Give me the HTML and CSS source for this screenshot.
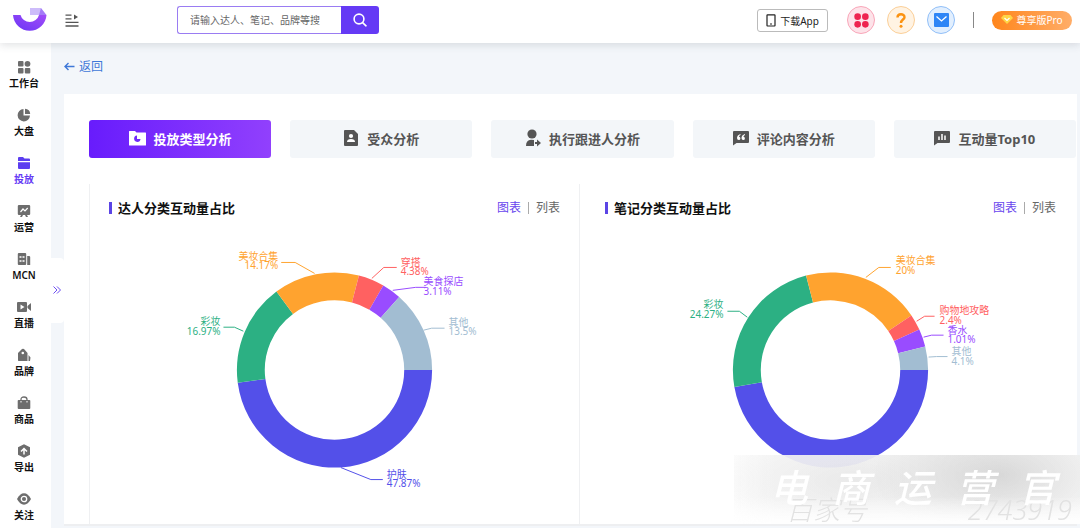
FILE: index.html
```html
<!DOCTYPE html>
<html lang="zh-CN">
<head>
<meta charset="utf-8">
<meta name="viewport" content="width=device-width, initial-scale=1">
<title>投放类型分析</title>
<link rel="stylesheet" href="styles.css">
</head>
<body>
<header class="topbar">
  <a class="logo" href="#" aria-label="首页">
    <svg width="34" height="26" viewBox="0 0 34 26">
      <defs><linearGradient id="logo-fill" x1="0" x2="1" y1="1" y2="0"><stop offset="0" stop-color="#6a35f5"/><stop offset="1" stop-color="#a24df8"/></linearGradient></defs>
      <path d="M0 8h7.500a9.600 9.600 0 0 0 18.500 0h7.500A16.800 17.200 0 0 1 0 8z" fill="url(#logo-fill)"/>
      <path d="M17 1h11v7H17z" fill="#cdbcfa"/><path d="M28 1l5.500 7H26z" fill="#a47bf7"/>
    </svg>
  </a>
  <button class="icon-button" type="button" aria-label="展开菜单">
    <svg width="14" height="13" viewBox="0 0 14 13" fill="none" stroke="#555" stroke-width="1.300"><path d="M.5 1.200h6M.5 4.800h6M.5 8.400h13M.5 12h13"/><path d="M9 .5l4 2.500-4 2.500z" fill="#555" stroke="none"/></svg>
  </button>
  <form class="search">
    <input class="search-input" type="text" placeholder="请输入达人、笔记、品牌等搜" aria-label="搜索">
    <button class="search-button" type="button" aria-label="搜索">
      <svg width="14" height="14" viewBox="0 0 14 14" fill="none" stroke="#fff" stroke-width="1.600" stroke-linecap="round"><circle cx="6" cy="6" r="4.900"/><path d="M9.600 9.600l3.400 3.200"/></svg>
    </button>
  </form>
  <div class="tools">
    <button class="download" type="button">
      <svg width="10" height="13" viewBox="0 0 10 13" fill="none" stroke="#222" stroke-width="1.200"><rect x="1" y=".8" width="8" height="11.200" rx=".5"/><path d="M4 10h2"/></svg>
      下载App
    </button>
    <button class="round round-red" type="button" aria-label="应用">
      <svg width="15" height="15" viewBox="0 0 14 14" fill="#ee2450"><circle cx="3.400" cy="3.400" r="3.100"/><circle cx="10.600" cy="3.400" r="3.100"/><circle cx="3.400" cy="10.600" r="3.100"/><circle cx="10.600" cy="10.600" r="3.100"/></svg>
    </button>
    <button class="round round-orange" type="button" aria-label="帮助">
      <svg width="10" height="15" viewBox="0 0 10 15"><path d="M1.500 4.500C1.500.3 8.500.3 8.500 4.200 8.500 6.600 5 6.600 5 10" fill="none" stroke="#fb9211" stroke-width="2.400"/><circle cx="5" cy="13.200" r="1.500" fill="#fb9211"/></svg>
    </button>
    <button class="round round-blue" type="button" aria-label="消息">
      <svg width="15" height="14" viewBox="0 0 15 14"><rect width="15" height="14" rx="1" fill="#2f86f6"/><path d="M2.500 3.500l5 4.500 5-4.500" fill="none" stroke="#fff" stroke-width="1.300"/></svg>
    </button>
    <span class="rule"></span>
    <button class="pro" type="button">
      <svg width="12" height="9" viewBox="0 0 12 9"><path d="M2.500 0h7L12 3 6 9 0 3z" fill="#ffd546"/><path d="M3.500 3L6 5.500 8.500 3" fill="none" stroke="#fff" stroke-width="1.200"/></svg>
      尊享版Pro
    </button>
  </div>
</header>
<div class="shell">
  <nav class="sidebar">
    <a class="nav-item" href="#"><svg class="nav-icon" viewBox="0 0 14 14"><rect x="1" y="1" width="5.500" height="5.500" rx="1"/><circle cx="10.500" cy="3.800" r="2.900"/><rect x="1" y="8" width="5.500" height="5.500" rx="1"/><rect x="7.800" y="8" width="5.500" height="5.500" rx="1"/></svg>工作台</a>
    <a class="nav-item" href="#"><svg class="nav-icon" viewBox="0 0 14 14"><path d="M6.500 1A6.200 6.200 0 1 0 13 7.500H6.500z"/><path d="M8 .8V6h5.200A5.600 5.600 0 0 0 8 .8z"/></svg>大盘</a>
    <a class="nav-item is-active" href="#"><svg class="nav-icon" viewBox="0 0 14 14"><path d="M1 5V2q0-1 1-1h4l1.500 1.500H12q1 0 1 1V5zM1 6.200h12V12q0 1-1 1H2q-1 0-1-1z"/></svg>投放</a>
    <a class="nav-item" href="#"><svg class="nav-icon" viewBox="0 0 14 14"><path d="M2 1h10q1.200 0 1.200 1v8q0 1-1.200 1h-2l1 2H9l-1-2H6l-1 2H3l1-2H2q-1.200 0-1.200-1V2Q.8 1 2 1z"/><path d="M3.500 8l2.500-3 2 2 2.700-3" fill="none" stroke="#fff" stroke-width="1.200"/></svg>运营</a>
    <a class="nav-item" href="#"><svg class="nav-icon" viewBox="0 0 14 14"><rect x=".8" y="1" width="8.400" height="12" rx="1"/><path d="M10.200 4H12q1.200 0 1.200 1v8h-3z"/><path d="M2.500 5h2M5.500 5h2M2.500 9h2M5.500 9h2" fill="none" stroke="#fff" stroke-width="1.300"/></svg>MCN</a>
    <a class="nav-item" href="#"><svg class="nav-icon" viewBox="0 0 14 14"><path d="M1 2h8q1 0 1 1v8q0 1-1 1H1q-1 0-1-1V3q0-1 1-1zM10.500 6L14 3v8l-3.500-3z"/><path d="M3.500 4.500v5L7.500 7z" fill="#fff"/></svg>直播</a>
    <a class="nav-item" href="#"><svg class="nav-icon" viewBox="0 0 14 14"><path d="M1 5l4-4q1-.6 2 0l3.500 4v8h-9Q1 13 1 12zM11.500 7l2 2.500-.5 3.500h-1.500z"/><circle cx="5.800" cy="5" r="1.300" fill="#fff"/></svg>品牌</a>
    <a class="nav-item" href="#"><svg class="nav-icon" viewBox="0 0 14 14"><path d="M1.500 4h11q.8 0 .8 1v7q0 1-1 1H1.700q-1 0-1-1V5q0-1 .8-1z"/><path d="M4 5V3.500Q4 1 7 1t3 2.500V5" fill="none" stroke="#6d6d6d" stroke-width="1.300"/><path d="M4 5v1.500M10 5v1.500" stroke="#fff"/></svg>商品</a>
    <a class="nav-item" href="#"><svg class="nav-icon" viewBox="0 0 14 14"><path d="M7 .3l6 3v7.400l-6 3-6-3V3.300z"/><path d="M7 10.500V5M4 7.500l3-3 3 3" fill="none" stroke="#fff" stroke-width="1.500"/></svg>导出</a>
    <a class="nav-item" href="#"><svg class="nav-icon" viewBox="0 0 14 14"><path d="M0 7q3-5.700 7-5.700T14 7q-3 5.700-7 5.700T0 7z"/><circle cx="7" cy="7" r="2.700" fill="none" stroke="#fff" stroke-width="1.300"/></svg>关注</a>
    <button class="expander" type="button" aria-label="展开侧栏">
      <svg width="8" height="8" viewBox="0 0 8 8" fill="none" stroke="#6b4cf0"><path d="M.5.500L4 4 .5 7.500M4 .5L7.500 4 4 7.500"/></svg>
    </button>
  </nav>
  <main class="content">
    <a class="back" href="#">
      <svg width="11" height="9" viewBox="0 0 11 9" fill="none" stroke="#3f78d8" stroke-width="1.400"><path d="M10.500 4.500H1M4.500 1L1 4.500 4.500 8"/></svg>
      返回
    </a>
    <section class="card">
      <div class="tabs">
        <button class="tab is-current" type="button"><svg width="17" height="16" viewBox="0 0 17 16"><path d="M0 1.500Q0 1 .5 1h5.500l1.500 1.500h9q.5 0 .5.500v12q0 .5-.5.500H.5Q0 15.500 0 15z" fill="#fff"/><path d="M8 5.500A3.200 3.200 0 1 0 11.500 9H8z" fill="#7028fb"/></svg>投放类型分析</button>
        <button class="tab" type="button"><svg width="16" height="16" viewBox="0 0 16 16"><path d="M1 1q0-1 1-1h9l4 4v11q0 1-1 1H2q-1 0-1-1z" fill="#555"/><circle cx="8" cy="6" r="2.100" fill="#fff"/><path d="M4 12q0-3 4-3t4 3z" fill="#fff"/></svg>受众分析</button>
        <button class="tab" type="button"><svg width="16" height="18" viewBox="0 0 16 18" fill="#555"><circle cx="7" cy="5" r="4.600"/><path d="M1 17q0-6 5-6.200l3 .2v6zM10 13h2v-2.500l4 3.500-4 3.500V15h-2z"/></svg>执行跟进人分析</button>
        <button class="tab" type="button"><svg width="16" height="16" viewBox="0 0 16 16"><path d="M1 1h14q1 0 1 1v10q0 1-1 1H3.500L0 15.500V2q0-1 1-1z" fill="#555"/><path d="M7.500 4Q4 5 4 8q0 2 1.700 2t1.700-1.600Q7.400 7 6 6.800 6 5.500 7.500 5zM12 4Q8.500 5 8.500 8q0 2 1.700 2t1.700-1.600q0-1.400-1.400-1.600 0-1.300 1.500-1.800z" fill="#fff"/></svg>评论内容分析</button>
        <button class="tab" type="button"><svg width="16" height="16" viewBox="0 0 16 16"><path d="M1 1h14q1 0 1 1v10q0 1-1 1H3.500L0 15.500V2q0-1 1-1z" fill="#555"/><path d="M5 6.500V10M8 4v6M11 5.500V10" stroke="#fff" stroke-width="1.500"/></svg>互动量Top10</button>
      </div>
      <div class="panels">
        <section class="panel panel-framed">
          <div class="panel-head">
            <h2 class="panel-title">达人分类互动量占比</h2>
            <button class="view is-current" type="button">图表</button><button class="view" type="button">列表</button>
          </div>
          <svg class="chart" viewBox="0 1 491 298" role="img" aria-label="达人分类互动量占比">
            <g id="talent-ring"></g>
            <g class="leaders">
              <path stroke="#ffa32f" d="M225.500 48L206 37H192"/>
              <path stroke="#ff6161" d="M283 53l12-11h13"/>
              <path stroke="#994cff" d="M304 65l23-3h10"/>
              <path stroke="#a2bdd2" d="M335 105l8-2h13"/>
              <path stroke="#2cb083" d="M154 106l-9-4h-11"/>
              <path stroke="#5350e9" d="M252 243l30 12h12"/>
            </g>
            <g class="labels">
              <text class="end orange"><tspan x="189" y="35">美妆合集</tspan><tspan x="189" y="44">14.17%</tspan></text>
              <text class="red"><tspan x="312" y="41">穿搭</tspan><tspan x="312" y="50">4.38%</tspan></text>
              <text class="purple"><tspan x="335" y="60">美食探店</tspan><tspan x="335" y="70">3.11%</tspan></text>
              <text class="gray"><tspan x="360" y="101">其他</tspan><tspan x="360" y="110">13.5%</tspan></text>
              <text class="end green"><tspan x="131" y="100">彩妆</tspan><tspan x="131" y="110">16.97%</tspan></text>
              <text class="blue"><tspan x="298" y="253">护肤</tspan><tspan x="298" y="262">47.87%</tspan></text>
            </g>
          </svg>
        </section>
        <section class="panel">
          <div class="panel-head">
            <h2 class="panel-title">笔记分类互动量占比</h2>
            <button class="view is-current" type="button">图表</button><button class="view" type="button">列表</button>
          </div>
          <svg class="chart" viewBox="0 1 491 298" role="img" aria-label="笔记分类互动量占比">
            <g id="note-ring"></g>
            <g class="leaders">
              <path stroke="#ffa32f" d="M281 52l13-10h12"/>
              <path stroke="#ff6161" d="M332 96l8-5h10"/>
              <path stroke="#994cff" d="M339 112l8-2h12"/>
              <path stroke="#a2bdd2" d="M344 132l8-0.500h11"/>
              <path stroke="#2cb083" d="M162 92l-8-6h-12"/>
            </g>
            <g class="labels">
              <text class="orange"><tspan x="311" y="39">美妆合集</tspan><tspan x="311" y="49">20%</tspan></text>
              <text class="red"><tspan x="355" y="89">购物地攻略</tspan><tspan x="355" y="99">2.4%</tspan></text>
              <text class="purple"><tspan x="363" y="109">香水</tspan><tspan x="363" y="118">1.01%</tspan></text>
              <text class="gray"><tspan x="367" y="130">其他</tspan><tspan x="367" y="140">4.1%</tspan></text>
              <text class="end green"><tspan x="138" y="83">彩妆</tspan><tspan x="138" y="93">24.27%</tspan></text>
            </g>
          </svg>
        </section>
      </div>
    </section>
  </main>
</div>
<div class="watermark">
  <span class="watermark-id"><span>百家号</span><span>2743919</span></span>
  <span class="watermark-name"><span>电</span><span>商</span><span>运</span><span>营</span><span>官</span></span>
</div>
<script src="charts.js"></script>
</body>
</html>
```
FILE: styles.css
```css
* { box-sizing: border-box; }
body {
  margin: 0;
  min-height: 100vh;
  display: flex;
  flex-direction: column;
  background: #f3f6fa;
  color: #222;
  font-family: "Noto Sans", "Noto Sans CJK SC", sans-serif;
  font-size: 12px;
}
button, input { font: inherit; }
button { border: 0; padding: 0; background: none; color: inherit; display: flex; align-items: center; justify-content: center; white-space: nowrap; }
a { text-decoration: none; color: inherit; }
svg { flex: none; }

.topbar {
  height: 43px;
  padding: 0 8px 3px 13px;
  display: flex;
  align-items: center;
  background: #fff;
  box-shadow: 0 2px 8px rgba(60, 70, 80, .16);
  z-index: 2;
}
.logo { display: flex; }
.icon-button { margin-left: 18px; }
.search { display: flex; width: 202px; height: 28px; margin-left: 98px; }
.search-input {
  flex: 1;
  min-width: 0;
  padding: 0 12px;
  border: 1px solid #9a7cf2;
  border-right: 0;
  border-radius: 3px 0 0 3px;
  background: #fff;
  font-size: 10px;
  outline: 0;
}
.search-input::placeholder { color: #666; }
.search-button { width: 38px; background: #653af5; border-radius: 0 3px 3px 0; }
.tools { display: flex; align-items: center; margin-left: auto; }
.download { width: 71px; height: 23px; gap: 4px; border: 1px solid #bbb; border-radius: 3px; background: #fff; font-size: 10px; margin-right: 19px; }
.round { width: 28px; height: 28px; border: 1px solid; border-radius: 50%; margin-right: 12px; }
.round-red { background: #fde3e9; border-color: #f9a6b9; }
.round-orange { background: #fff3e3; border-color: #fbcf98; }
.round-blue { background: #e2effe; border-color: #91bff8; }
.rule { width: 1px; height: 16px; margin: 0 18px 0 6px; background: #888; }
.pro { width: 80px; height: 19px; gap: 3px; padding-bottom: 2px; border-radius: 10px; background: linear-gradient(90deg, #ff861c, #ffad68); color: #fff; font-size: 10px; }

.shell { flex: 1; display: flex; }
.sidebar { position: relative; width: 51px; padding: 17px 3px 0 0; background: #fff; }
.nav-item { height: 48px; display: flex; flex-direction: column; align-items: center; gap: 2px; font-size: 10px; line-height: 14px; font-weight: 600; color: #111; }
.nav-icon { width: 14px; height: 14px; fill: #6d6d6d; }
.nav-item.is-active { color: #653af5; }
.is-active .nav-icon { fill: #5b3df0; }
.expander { position: absolute; left: 100%; top: 215px; width: 13px; height: 65px; padding: 0 2px 2px 0; background: #fff; border-radius: 0 4px 4px 0; }

.content { flex: 1; min-width: 0; padding: 14px 3px 3px 13px; }
.back { display: inline-flex; align-items: center; gap: 4px; height: 18px; color: #3f78d8; font-size: 12px; }
.card { margin-top: 19px; padding: 26px 1px 0 25px; background: #fff; border-bottom: 2px solid #eeeff1; }
.tabs { display: grid; grid-template-columns: repeat(5, 1fr); gap: 19px; }
.tab { height: 38px; gap: 8px; padding-bottom: 2px; border-radius: 3px; background: #f3f6f9; color: #555; font-size: 13px; font-weight: 700; }
.tab.is-current { background: linear-gradient(90deg, #681cfc, #9140fd); color: #fff; }
.panels { display: grid; grid-template-columns: 1fr 1fr; gap: 5px; margin-top: 26px; }
.panel { min-width: 0; border: solid transparent; border-width: 0 1px; }
.panel-framed { border-color: #eff0f2; }
.panel-head { display: flex; align-items: center; height: 42px; padding: 6px 19px 0 19px; }
.panel-title { margin: 0 auto 0 0; padding-left: 6px; border-left: 3px solid #5b45e5; color: #111; font-size: 13px; line-height: 12px; font-weight: 700; }
.view { color: #666; font-size: 12px; line-height: 12px; }
.view.is-current { color: #6845ee; }
.view + .view { margin-left: 7px; padding-left: 7px; border-left: 1px solid #aaa; }
.chart { display: block; width: 100%; height: 298px; }
.leaders { fill: none; stroke-width: 1; }
.labels { font-size: 10px; }
.end { text-anchor: end; }
.orange { fill: #ffa32f; }
.red { fill: #ff6161; }
.purple { fill: #994cff; }
.gray { fill: #a2bdd2; }
.green { fill: #2cb083; }
.blue { fill: #5350e9; }

.watermark {
  position: fixed;
  right: 0;
  bottom: 4px;
  width: 346px;
  height: 69px;
  background:
    linear-gradient(rgba(255, 255, 255, 0) 60%, #fff),
    radial-gradient(ellipse 130px 65px at 265px 20px, rgba(205, 205, 205, .75), transparent),
    radial-gradient(ellipse 170px 60px at 120px 26px, rgba(222, 222, 222, .6), transparent),
    linear-gradient(90deg, rgba(255, 255, 255, .6), rgba(250, 250, 250, .9) 40px);
  z-index: 3;
}
.watermark-id { position: absolute; inset: auto 8px 0 52px; display: flex; justify-content: space-between; color: #e2e2e2; font-size: 27px; line-height: 28px; font-style: italic; font-weight: 300; white-space: nowrap; }
.watermark-name { position: absolute; inset: 8px 24px 0 36px; display: flex; justify-content: space-between; color: #fff; font-size: 38px; line-height: 48px; font-style: italic; font-weight: 500; }
```
FILE: charts.js
```js
const SVG_NS = "http://www.w3.org/2000/svg";

// Slices run clockwise from three o'clock; end angles are in degrees.
function drawRing(id, slices) {
  const cx = 245.5, cy = 145, outer = 98, inner = 70;
  const group = document.getElementById(id);
  const point = (radius, degrees) => {
    const a = degrees * Math.PI / 180;
    return `${cx + radius * Math.cos(a)} ${cy + radius * Math.sin(a)}`;
  };
  let start = 0;
  for (const [end, color] of slices) {
    const large = end - start > 180 ? 1 : 0;
    const path = document.createElementNS(SVG_NS, "path");
    path.setAttribute("d", `M${point(outer, start)}A${outer} ${outer} 0 ${large} 1 ${point(outer, end)}L${point(inner, end)}A${inner} ${inner} 0 ${large} 0 ${point(inner, start)}z`);
    path.setAttribute("fill", color);
    group.append(path);
    start = end;
  }
}

drawRing("talent-ring", [
  [172.5, "#5350e9"], [233.5, "#2cb083"], [284.5, "#ffa32f"],
  [300, "#ff6161"], [311.5, "#994cff"], [360, "#a2bdd2"]
]);
drawRing("note-ring", [
  [170, "#5350e9"], [255.5, "#2cb083"], [326, "#ffa32f"],
  [335.5, "#ff6161"], [346, "#994cff"], [360, "#a2bdd2"]
]);
```
